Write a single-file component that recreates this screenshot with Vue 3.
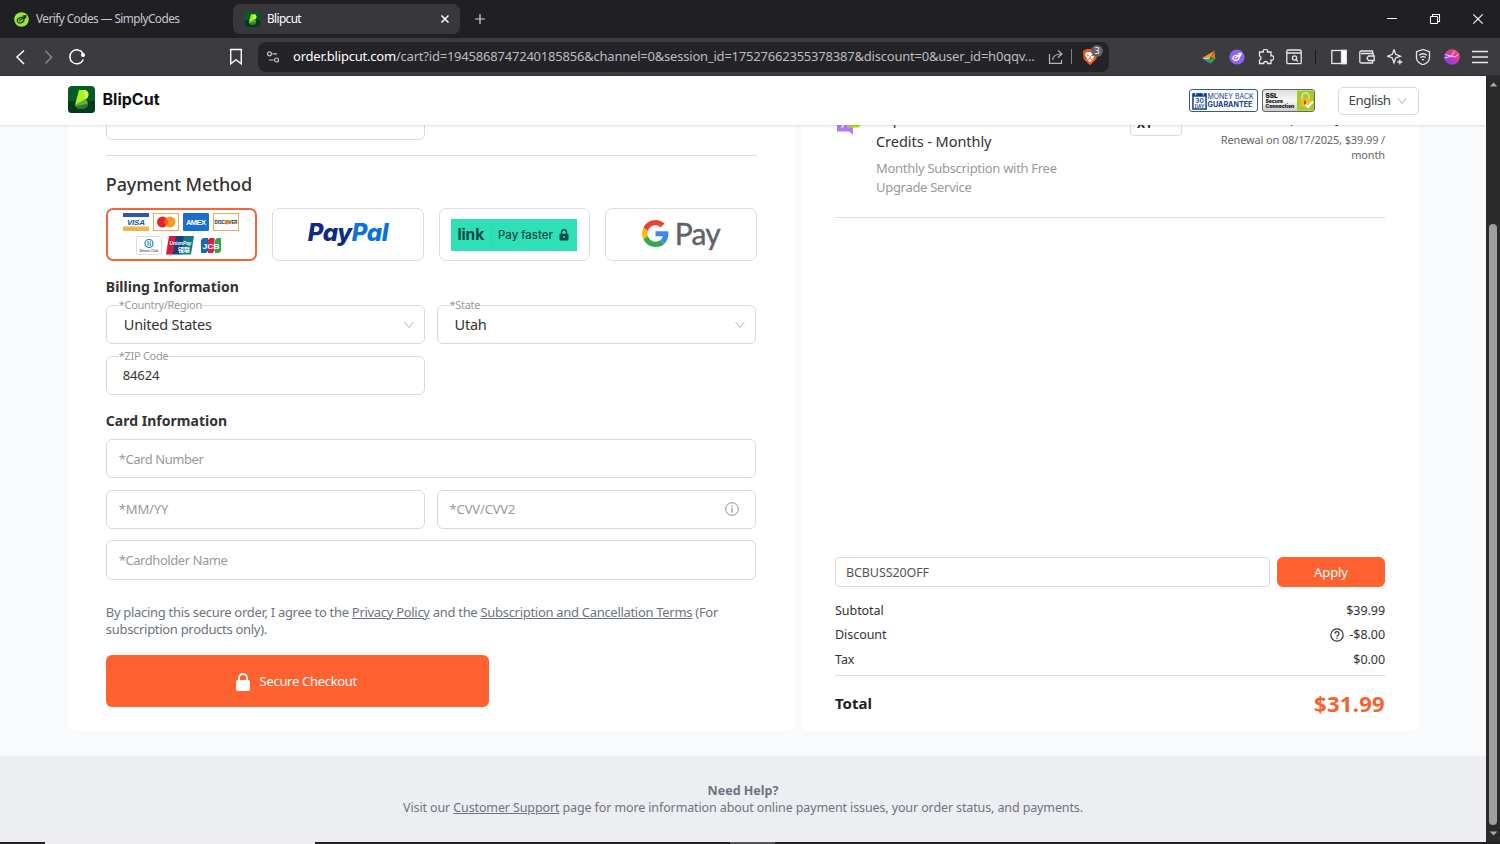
<template>
  <div class="browser">
    <!-- Tab strip -->
    <div class="tabs">
      <div class="tab tab-idle">
        <svg class="fav" viewBox="0 0 16 16">
          <circle cx="8" cy="8" r="7.8" fill="#9be63c" />
          <g fill="none" stroke="#1c3a12" stroke-width="1.3" stroke-linecap="round">
            <ellipse cx="7" cy="8.8" rx="3.6" ry="2.7" transform="rotate(-20 7 8.8)" />
            <path d="M5.8 9.3 12.8 4.2M9.5 4.5l3.3-.6M10.8 7.2l1.8-1.6" />
          </g>
        </svg>
        <span class="t-idle">Verify Codes — SimplyCodes</span>
      </div>
      <div class="tab tab-active">
        <BlipLogo class="fav" />
        <span class="t-active">Blipcut</span>
        <svg class="tab-close" viewBox="0 0 10 10"><path d="M1.5 1.5l7 7M8.5 1.5l-7 7" stroke="#fff" stroke-width="1.5" /></svg>
      </div>
      <svg class="tab-new" viewBox="0 0 12 12"><path d="M6 1v10M1 6h10" stroke="#d6d6da" stroke-width="1.2" /></svg>
      <div class="win">
        <svg viewBox="0 0 12 12"><path d="M1 5.5h10" stroke="#fff" /></svg>
        <svg viewBox="0 0 12 12" fill="none" stroke="#fff" stroke-width="1.1"><rect x="1.5" y="3.5" width="7" height="7" rx=".6" /><path d="M3.5 3.5v-2h7v7h-2" /></svg>
        <svg viewBox="0 0 12 12"><path d="M1.3 1.3l9.4 9.4M10.7 1.3l-9.4 9.4" stroke="#fff" stroke-width="1.1" /></svg>
      </div>
    </div>

    <!-- Address bar row -->
    <div class="toolbar">
      <svg class="nav back" viewBox="0 0 18 18"><path d="M12 2.500 5 9l7 7" /></svg>
      <svg class="nav fwd" viewBox="0 0 18 18"><path d="M6.500 3l6 6.300-6 6.300" /></svg>
      <svg class="nav reload" viewBox="0 0 18 18"><path d="M15.300 11.500A7 7 0 1 1 15 5.500" /><circle cx="15" cy="7" r="2.100" fill="#fff" stroke="none" /></svg>
      <svg class="nav mark" viewBox="0 0 14 18"><path d="M1.700 1.500h10.600v14.300L7 11.800l-5.300 4z" /></svg>
      <div class="omni">
        <svg class="tune" viewBox="0 0 14 14"><circle cx="3.500" cy="3.800" r="2" /><path d="M6.500 3.800H11M3 10h4.500" /><circle cx="10.500" cy="10" r="2" /></svg>
        <span class="url"><b>order.blipcut.com</b>/cart?id=1945868747240185856&amp;channel=0&amp;session_id=17527662355378387&amp;discount=0&amp;user_id=h0qqv...</span>
        <svg class="share" viewBox="0 0 16 16"><path d="M1.500 5v9.300h12V11M4.500 11c.5-4 3-6 9-6M10 1.500 14 5l-4 3.500" /></svg>
        <i class="bar"></i>
        <div class="shield">
          <svg viewBox="0 0 16 18">
            <path d="M4 1h8l1.500 1.500 1.500.3-.5 8.200L8 17.300 1.500 11 1 2.800l1.500-.3z" fill="#f4511e" />
            <path d="M4 4.500 8 4l4 .5 1 2-2 4.500L8 14.500 5 11 3 6.500z" fill="#fff" />
            <path d="M4.800 7l2 .6M11.200 7l-2 .6M8 8v2.500M6 11.500 8 10.500l2 1" stroke="#f4511e" fill="none" />
          </svg>
          <em>3</em>
        </div>
      </div>
      <div class="exts">
        <svg viewBox="0 0 16 16"><path d="M1 9 14 1.500 9.500 8z" fill="#f59a23" /><path d="M9.500 8 14 3v7z" fill="#ef6c2f" /><path d="M1 9l8.500-1-2.500 4z" fill="#eedb34" /><path d="M4 10.500l11-1.500-5 5.500z" fill="#29a74a" /><path d="M2 10l5 .5 1.500 4z" fill="#3d7de0" /></svg>
        <svg viewBox="0 0 16 16"><circle cx="8" cy="8" r="7.600" fill="#9063f5" /><g fill="none" stroke="#fff" stroke-width="1.200" stroke-linecap="round"><ellipse cx="7" cy="8.800" rx="3.200" ry="2.500" transform="rotate(-20 7 8.800)" /><path d="M6 9.200 12.300 4.500M9.500 4.500l2.800-.2M10.500 7.500l1.500-1.500" /></g></svg>
        <svg class="ln" viewBox="0 0 16 16"><path d="M1.500 3h3.800a2.200 2.200 0 1 1 4.200 0h3.500v3.800a2.200 2.200 0 1 1 0 4.200v3.500H9.700a2 2 0 0 0-4 0H1.500V11a2.200 2.200 0 0 0 0-4.200z" /></svg>
        <svg class="ln" viewBox="0 0 16 16"><rect x=".8" y="1" width="14.400" height="13.700" rx="1.200" /><path d="M.8 4h14.400M10 10.500l2 2" /><circle cx="8.500" cy="9" r="2.100" /></svg>
        <i class="sep"></i>
        <svg class="ln" viewBox="0 0 16 16"><rect x=".8" y="1.500" width="14.400" height="13" /><path d="M10.500 1.500h4.700v13h-4.700z" fill="#fff" /></svg>
        <svg class="ln" viewBox="0 0 16 16"><path d="M13.500 4.500V2H2.200A1.500 1.500 0 0 0 .8 3.500v9a1.500 1.500 0 0 0 1.400 1.500h11.300v-2.500M2 4.500h12.200V7M9.500 7h5.700v4.500H9.500L8 9.200z" /></svg>
        <svg class="ln" viewBox="0 0 16 16"><path d="M7 .8l1.700 4.500 4.800 1.900-4.800 1.800L7 13.800 5.300 9 .6 7.200l4.700-1.900zM12.800 10.500v5M10.300 13h5" /></svg>
        <svg class="ln" viewBox="0 0 16 16"><path d="M8 .5l6.500 2.200v5.800c0 3.500-3 6-6.500 7.300-3.500-1.300-6.500-3.800-6.500-7.300V2.700zM4 6.200c2.500-1.800 5.500-1.800 8 0M5.300 8.500c1.800-1.200 3.600-1.200 5.400 0M7 10.600h2" /></svg>
        <svg viewBox="0 0 16 16">
          <defs><linearGradient id="leo" x1="1" y1="0" x2="0" y2="1"><stop offset="0" stop-color="#fa5b3d" /><stop offset=".5" stop-color="#cf35b4" /><stop offset="1" stop-color="#4f50f0" /></linearGradient></defs>
          <circle cx="8" cy="8" r="7.800" fill="url(#leo)" /><path d="M1 5.500 11 8l4-3M.5 9l7-1.800 3-5" fill="none" stroke="#e8c9f5" stroke-width="1" />
        </svg>
        <svg class="ln menu" viewBox="0 0 16 16"><path d="M0 2.500h16M0 8h16M0 13.500h16" /></svg>
      </div>
    </div>

    <div class="viewport">
      <div class="page">
        <header class="site-head">
          <BlipLogo class="logo" />
          <span class="brand">BlipCut</span>
          <div class="badge money">
            <svg viewBox="0 0 16 20"><path d="M1 3h14v16H1z" fill="#fff" stroke="#123f91" stroke-width="1.600" /><path d="M1 2.500h14V6H1z" fill="#123f91" /><path d="M4 .5v4M12 .5v4" stroke="#fff" /><text x="8" y="12.500">30</text><text x="8" y="18" class="day">DAY</text></svg>
            <div><span>MONEY BACK</span><b>GUARANTEE</b></div>
          </div>
          <div class="badge ssl">
            <div><b class="big">SSL</b><b>Secure</b><b>Connection</b></div>
            <svg viewBox="0 0 17 20"><path d="M0 0h17v20H0z" fill="#a5cb27" /><path d="M5 9V6a3.500 3.500 0 0 1 7 0v3" fill="none" stroke="#d9dfc0" stroke-width="1.600" /><rect x="3.500" y="8" width="10" height="8" fill="#f4bd21" /><path d="M7 10h2v4H7z" fill="#a35a10" /><path d="M8.500 14l2.500 2.500 5-5.500" fill="none" stroke="#fff" stroke-width="2" /></svg>
          </div>
          <div class="lang"><span>English</span><Chevron /></div>
        </header>

        <main class="content">
          <section class="panel left">
            <div class="field cut"></div>
            <hr />
            <h2>Payment Method</h2>
            <div class="methods">
              <div class="method selected">
                <svg viewBox="0 0 120 44">
                  <g class="mk">
                    <rect x="2" y="0" width="26" height="4" fill="#2b5aa8" /><rect x="2" y="13.500" width="26" height="4.500" fill="#ebb650" />
                    <text x="15" y="12" font-size="8" font-style="italic" fill="#24529b" textLength="18">VISA</text>
                    <rect x="32.500" y=".5" width="25" height="17" fill="#fff" stroke="#e6ac58" /><circle cx="41.500" cy="9" r="5.500" fill="#e8232d" /><circle cx="49" cy="9" r="5.500" fill="#f59b24" /><path d="M45.250 5a5.500 5.500 0 0 1 0 8 5.500 5.500 0 0 1 0-8" fill="#f05a22" />
                    <rect x="62" y="0" width="26" height="18" rx="1" fill="#1970cd" /><text x="75" y="11.800" font-size="7.500" fill="#fff" textLength="20">AMEX</text>
                    <rect x="92.500" y=".5" width="25" height="17" fill="#fff" stroke="#e6ac58" /><text x="105" y="11.200" font-size="5.500" fill="#222" textLength="23" lengthAdjust="spacingAndGlyphs">DISCOVER</text><circle cx="106" cy="9.200" r="2.200" fill="#f08020" />
                    <rect x="15.500" y="23.500" width="25" height="18" rx="1" fill="#fff" stroke="#d8dce4" /><circle cx="28" cy="30.500" r="4" fill="#fff" stroke="#1b7fb5" stroke-width="1.200" /><path d="M27 28v5M29.200 28v5" stroke="#1b7fb5" /><text x="28" y="38.800" font-size="4" fill="#777" textLength="19">Diners Club</text>
                    <path d="M48 23h8l-3.500 18.500H45z" fill="#d8193f" /><path d="M55 23h9l-3.500 18.500h-9z" fill="#14427e" /><path d="M63 23h10l-3 18.500H59.500z" fill="#0d7d83" /><text x="59.500" y="31.500" font-size="6" font-style="italic" fill="#fff" textLength="22" lengthAdjust="spacingAndGlyphs">UnionPay</text><text x="63" y="38.500" font-size="6" fill="#fff" textLength="12">银联</text>
                    <path d="M82 25h5v13l-2 2h-5V27z" fill="#1767b3" /><path d="M89 25h4.500v13l-2 2H87V27z" fill="#d8203f" /><path d="M96 25h4v13l-2 2h-4V27z" fill="#2ea64a" /><text x="90" y="35.500" font-size="8" fill="#fff" textLength="17" lengthAdjust="spacingAndGlyphs">JCB</text>
                  </g>
                </svg>
              </div>
              <div class="method"><span class="paypal"><b>Pay</b><b class="pal">Pal</b></span></div>
              <div class="method">
                <div class="link">
                  <b>link</b><i></i><span>Pay faster</span>
                  <svg viewBox="0 0 10 12"><rect x=".5" y="4.800" width="9" height="6.700" rx="1" fill="#0b4a43" /><path d="M2.500 5V3.300a2.500 2.500 0 0 1 5 0V5" fill="none" stroke="#0b4a43" stroke-width="1.400" /><circle cx="5" cy="8" r="1" fill="#2fe0b6" /></svg>
                </div>
              </div>
              <div class="method gpay">
                <svg viewBox="0 0 48 48">
                  <path fill="#EA4335" d="M24 9.500c3.540 0 6.710 1.220 9.210 3.600l6.850-6.850C35.900 2.380 30.470 0 24 0 14.620 0 6.510 5.380 2.560 13.220l7.980 6.190C12.430 13.720 17.740 9.500 24 9.500z" />
                  <path fill="#4285F4" d="M46.980 24.550c0-1.570-.15-3.090-.38-4.550H24v9.020h12.940c-.58 2.960-2.260 5.480-4.780 7.180l7.730 6c4.510-4.180 7.090-10.360 7.090-17.650z" />
                  <path fill="#FBBC05" d="M10.530 28.590c-.48-1.450-.76-2.990-.76-4.590s.27-3.140.76-4.590l-7.980-6.190C.92 16.460 0 20.120 0 24c0 3.880.92 7.540 2.560 10.780l7.970-6.190z" />
                  <path fill="#34A853" d="M24 48c6.480 0 11.930-2.130 15.890-5.810l-7.730-6c-2.150 1.450-4.920 2.300-8.160 2.300-6.260 0-11.570-4.220-13.470-9.910l-7.980 6.190C6.510 42.620 14.620 48 24 48z" />
                </svg>
                <span>Pay</span>
              </div>
            </div>

            <h3>Billing Information</h3>
            <div class="grid">
              <div class="field sel"><label>*Country/Region</label><span>United States</span><Chevron /></div>
              <div class="field sel"><label>*State</label><span>Utah</span><Chevron /></div>
              <div class="field val"><label>*ZIP Code</label><span>84624</span></div>
            </div>

            <h3>Card Information</h3>
            <div class="grid">
              <div class="field wide">*Card Number</div>
              <div class="field">*MM/YY</div>
              <div class="field cvv">*CVV/CVV2
                <svg viewBox="0 0 14 14"><circle cx="7" cy="7" r="6.300" fill="none" stroke="#8d8d8d" /><path d="M7 6v4.500M7 3.500v1.300" stroke="#8d8d8d" stroke-width="1.200" /></svg>
              </div>
              <div class="field wide">*Cardholder Name</div>
            </div>

            <p class="terms">By placing this secure order, I agree to the <u>Privacy Policy</u> and the <u>Subscription and Cancellation Terms</u> (For<br />subscription products only).</p>
            <div class="checkout">
              <svg viewBox="0 0 14 18"><rect y="7" width="14" height="11" rx="2" fill="#fff" /><path d="M3 8V5a4 4 0 0 1 8 0v3" fill="none" stroke="#fff" stroke-width="1.800" /></svg>
              <span>Secure Checkout</span>
            </div>
          </section>

          <section class="panel right">
            <div class="item">
              <svg class="thumb" viewBox="0 0 26 26"><path d="M2 4h16v15.500l-4-3H2z" fill="#b07cf5" /><path d="M12 2h14v7.500l-2 3h-9z" fill="#9bea18" /><path d="M12 9h5l-2 3.500h-3z" fill="#f3a95c" /><path d="M6 9.500l3 1.500-3 1.500" fill="none" stroke="#fff" /></svg>
              <div class="desc">
                <div class="name">BlipCut 300<br />Credits - Monthly</div>
                <div class="sub">Monthly Subscription with Free<br />Upgrade Service</div>
              </div>
              <div class="qty">X1</div>
              <div class="price"><div class="now">Up to only $39.99</div>Renewal on 08/17/2025, $39.99 /<br />month</div>
            </div>
            <div class="coupon">
              <div class="code">BCBUSS20OFF</div>
              <div class="apply">Apply</div>
            </div>
            <div class="rows">
              <div v-for="r in rows" :key="r.label" class="row">
                <span>{{ r.label }}</span>
                <span class="amt">
                  <svg v-if="r.help" viewBox="0 0 14 14"><circle cx="7" cy="7" r="6.200" fill="none" stroke="#333" stroke-width="1.200" /><path d="M5 5.700a2 2 0 1 1 3 1.700c-.7.400-1 .6-1 1.300M7 9.700v1.200" fill="none" stroke="#333" stroke-width="1.200" /></svg>
                  {{ r.amount }}
                </span>
              </div>
            </div>
            <div class="total"><b>Total</b><b class="sum">$31.99</b></div>
          </section>
        </main>

        <footer class="help">
          <b>Need Help?</b>
          <p>Visit our <u>Customer Support</u> page for more information about online payment issues, your order status, and payments.</p>
        </footer>
      </div>

      <div class="scroll">
        <svg viewBox="0 0 10 6"><path d="M5 .5 9.500 5.500H.5z" fill="#a9a9a9" /></svg>
        <div class="thumb-bar"></div>
        <svg viewBox="0 0 10 6"><path d="M5 5.500 9.500.5H.5z" fill="#a9a9a9" /></svg>
      </div>
    </div>
    <div class="taskbar"><i></i><i class="dim"></i></div>
  </div>
</template>

<script setup>
import { h } from 'vue'

const rows = [
  { label: 'Subtotal', amount: '$39.99' },
  { label: 'Discount', amount: '-$8.00', help: true },
  { label: 'Tax', amount: '$0.00' }
]

// Logo shared by the tab and the site header
const BlipLogo = () => h('svg', { viewBox: '0 0 27 27' }, [
  h('rect', { width: 27, height: 27, rx: 4, fill: '#075b27' }),
  h('path', { d: 'M0 15h27v8a4 4 0 0 1-4 4H4a4 4 0 0 1-4-4z', fill: '#043b1c' }),
  h('path', { d: 'M7 19l10-5.500c4.500 1.500 4 9-2 9h-4c-2 0-3.500-1.200-4-3.500z', fill: '#6aa84a' }),
  h('path', { d: 'M7.500 20l9.500-1.500c2-.5 3-1.500 3-1.500 0 3.500-2 5.500-5 5.500h-4c-2 0-3-1-3.500-2.500z', fill: '#2b7a35' }),
  h('path', { d: 'M11 4h5c5.500 0 6 7.500 1 9.500L7 19z', fill: '#a4f41d' }),
  h('path', { d: 'M15.500 4H16c5.500 0 6 7.500 1 9.500z', fill: '#d3f65b' })
])

const Chevron = () => h('svg', { class: 'chev', viewBox: '0 0 10 8' }, [
  h('path', { d: 'M.7 1l4.300 5.500L9.300 1', fill: 'none', stroke: '#b5b5b5' })
])
</script>

<style scoped>
.browser {
  display: flex;
  flex-direction: column;
  width: 1500px;
  height: 844px;
  overflow: hidden;
  font-family: "Noto Sans", "Open Sans", sans-serif;
  color: #333;
  background: #201f24;
}

.browser :deep(svg) { display: block; flex: none; }
span, b { white-space: nowrap; }

/* Tabs */
.tabs { display: flex; align-items: center; height: 38px; flex: none; background: #201f24; font-size: 11.8px; }
.tab { display: flex; align-items: center; }
.tab-idle { width: 219px; padding-left: 14px; color: #c8c8cc; }
.fav { width: 15px; height: 15px; margin-right: 7px; }
.t-idle { margin-top: -2px; letter-spacing: -0.55px; }
.tab-active { width: 227px; height: 30px; box-sizing: border-box; padding: 0 10px 0 12px; border-radius: 7px; background: #38373c; color: #fff; }
.t-active { flex: 1; margin-top: -2px; letter-spacing: -0.6px; }
.tab-close { width: 10px; height: 10px; }
.tab-new { width: 12px; height: 12px; margin-left: 14px; }
.win { display: flex; gap: 31px; margin: 0 16px 0 auto; }
.win svg { width: 12px; height: 12px; }

/* Toolbar */
.toolbar { display: flex; align-items: center; height: 38px; flex: none; background: #3c3b40; border-bottom: 1px solid #302f34; box-sizing: border-box; }
.nav { fill: none; stroke: #fff; stroke-width: 1.5; width: 18px; height: 18px; }
.back { margin-left: 12px; }
.fwd { stroke: #88878c; margin-left: 9px; }
.reload { margin-left: 11px; }
.mark { width: 14px; height: 18px; margin-left: 143px; stroke-width: 1.4; }
.omni { display: flex; align-items: center; width: 851px; height: 30px; margin-left: 15px; border-radius: 8px; background: #242328; }
.tune { width: 14px; height: 14px; margin-left: 8px; fill: none; stroke: #c6c6ca; stroke-width: 1.2; }
.url { width: 745px; margin: -1px 0 0 13px; font-size: 13px; letter-spacing: -0.21px; color: #bdbdc1; }
.url b { font-weight: 400; color: #fff; }
.share { width: 16px; height: 16px; margin-left: 10px; fill: none; stroke: #b5b5ba; stroke-width: 1.2; }
.bar { width: 1px; height: 15px; margin-left: 7px; background: #808085; }
.shield { position: relative; margin-left: 10px; }
.shield svg { width: 16px; height: 18px; }
.shield em { position: absolute; left: 9px; top: -3px; width: 12px; height: 12px; border-radius: 6px; background: #62616b; color: #fff; font: normal 9px/12px "Noto Sans", sans-serif; text-align: center; }
.exts { display: flex; align-items: center; gap: 12.3px; margin: 0 12px 0 auto; }
.exts svg { width: 16px; height: 16px; }
.sep { width: 1px; height: 14px; margin: 0 2px 0 1px; background: #19191c; }
.ln { fill: none; stroke: #e8e8ea; stroke-width: 1.3; }

/* Viewport and scrollbar */
.viewport { display: flex; height: 766px; flex: none; }
.page { display: flex; flex-direction: column; width: 1486px; background: #f9fafc; }
.scroll { display: flex; flex-direction: column; align-items: center; width: 14px; box-sizing: border-box; padding: 6px 0 6px; background: #2b2b2b; }
.scroll svg { width: 9px; height: 5px; }
.thumb-bar { width: 8px; height: 601px; margin: 137px 0 auto; border-radius: 4px; background: #9f9f9f; }

/* Site header */
.site-head { position: relative; z-index: 2; display: flex; align-items: center; height: 49px; flex: none; box-sizing: border-box; padding: 0 67.5px 0 68px; background: #fff; box-shadow: 0 1px 2px rgba(0, 0, 0, 0.12); }
.logo { width: 27px; height: 27px; margin-top: -2px; }
.brand { margin: -3px auto 0 7.5px; font: 700 16px Inter, sans-serif; color: #111; }
.badge { display: flex; height: 23px; box-sizing: border-box; border-radius: 3px; }
.badge div { display: flex; flex-direction: column; }
.money { width: 69px; padding: 1px 3px 0 2px; border: 1px solid #31579d; color: #123f91; font: 6.9px/8px Inter, sans-serif; }
.money svg { width: 15px; height: 19px; }
.money text { font: 600 7px Inter, sans-serif; fill: #123f91; text-anchor: middle; }
.money .day { font-size: 5px; }
.money div { padding: 2px 0 0 1px; }
.money b { font-size: 7.2px; }
.ssl { width: 53px; margin: 0 23px 0 4px; border: 1px solid #666; background: linear-gradient(#ddd, #f8f8f8 50%, #ccc); overflow: hidden; font: 700 5px/5px Inter, sans-serif; color: #222; }
.ssl div { width: 34px; padding: 3px 0 0 3px; box-sizing: border-box; letter-spacing: -0.05px; }
.ssl .big { font-size: 6.5px; line-height: 6px; }
.ssl svg { width: 17px; height: 21px; }
.lang { display: flex; align-items: center; width: 81px; height: 28px; box-sizing: border-box; padding: 0 11px 0 10px; border: 1px solid #d9d9d9; border-radius: 5px; font-size: 13.3px; letter-spacing: -0.45px; color: #444; }
.lang span { margin-top: -1px; }
.lang .chev { margin-left: auto; }
.chev { width: 10px; height: 8px; }

/* Panels */
.content { display: flex; gap: 6.5px; height: 631px; flex: none; padding: 0 68px; overflow: hidden; }
.panel { box-sizing: border-box; height: 605.5px; flex: none; border-radius: 0 0 8px 8px; background: #fff; }
.left { width: 727px; padding: 0 38.4px 0 37.8px; }
.right { display: flex; flex-direction: column; width: 617px; padding: 0 33.5px; }
.field { position: relative; display: flex; align-items: center; height: 39.4px; box-sizing: border-box; padding: 0 12px; border: 1px solid #d9d9d9; border-radius: 6px; background: #fff; font-size: 13px; letter-spacing: -0.15px; color: #999; }
.cut { width: 319.6px; height: 40px; margin-top: -25px; }
hr { height: 1px; margin: 15px 0 0; border: 0; background: #dedede; }
h2 { margin: 15px 0 0; font-size: 18px; line-height: 26px; font-weight: 500; letter-spacing: -0.15px; color: #333; }
.methods { display: grid; grid-template-columns: repeat(4, 151.5px); justify-content: space-between; margin-top: 11px; }
.method { display: flex; align-items: center; justify-content: center; height: 53px; box-sizing: border-box; border: 1px solid #dedede; border-radius: 7px; }
.selected { border: 2px solid #f2653a; }
.selected svg { width: 120px; height: 44px; margin: 1px 2px 0 0; }
.mk text { font-family: "Liberation Sans", "Noto Sans CJK SC", sans-serif; font-weight: 700; text-anchor: middle; }
.paypal { margin-top: -3px; font: italic 24px/30px Inter, sans-serif; letter-spacing: -0.4px; color: #0b2c82; }
.paypal b { font-weight: 800; }
.paypal .pal { color: #0a72dc; }
.link { display: flex; align-items: center; width: 126px; height: 32px; box-sizing: border-box; padding: 0 8px 0 6px; background: #2fe0b6; color: #0b4a43; font: 500 11.4px Inter, sans-serif; }
.link b { font-size: 15.5px; letter-spacing: -0.1px; }
.link i { width: 1px; height: 20px; margin: 0 6px 0 7px; background: #2bd2ab; }
.link svg { width: 10px; height: 12px; margin-left: auto; }
.gpay { gap: 6px; }
.gpay svg { width: 27px; height: 27px; margin-top: -3px; }
.gpay span { margin-top: -4px; font: 30px/40px Lato, sans-serif; color: #5f6368; -webkit-text-stroke: 0.4px #5f6368; letter-spacing: -0.8px; }
h3 { margin: 16px 0 0; font-size: 14px; line-height: 20px; font-weight: 700; color: #333; letter-spacing: 0.02px; }
.grid { display: grid; grid-template-columns: 319.6px 319.6px; gap: 11.2px; margin-top: 8px; }
.wide { grid-column: span 2; letter-spacing: -0.45px; }
.field label { position: absolute; left: 12px; top: -8px; height: 14px; background: #fff; font-size: 11px; line-height: 14px; letter-spacing: -0.3px; color: #999; }
.sel, .val { color: #333; }
.sel { font-size: 14.5px; padding-left: 17px; letter-spacing: -0.25px; }
.sel span { margin-top: -1px; }
.val { font-size: 13px; padding-left: 16px; }
.sel .chev { margin: 0 -2px 0 auto; }
.cvv svg { width: 14px; height: 14px; margin: 0 4px 0 auto; }
.terms { margin: 24px 0 0; font-size: 13px; line-height: 17px; letter-spacing: -0.3px; color: #6d7380; white-space: nowrap; }
.checkout { display: flex; align-items: center; justify-content: center; gap: 10px; width: 383px; height: 52px; box-sizing: border-box; margin-top: 17px; padding-right: 2px; border-radius: 6px; background: #ff6230; color: #fff; font-size: 13px; letter-spacing: -0.3px; }
.checkout svg { width: 14px; height: 18px; margin-top: 2px; }

/* Order summary */
.item { display: flex; height: 114px; flex: none; box-sizing: border-box; margin-top: -21px; border-bottom: 1px solid #dedede; }
.thumb { width: 26px; height: 26px; margin-top: 11px; }
.desc { width: 254px; margin-left: 15px; }
.name { margin-top: 3px; font-size: 14.5px; line-height: 23px; letter-spacing: -0.05px; color: #333; }
.sub { margin-top: 6px; font-size: 13px; line-height: 19px; letter-spacing: -0.3px; color: #999; }
.qty { width: 52px; height: 32px; box-sizing: border-box; padding: 10px 6px 0; border: 1px solid #d9d9d9; border-radius: 4px; font-size: 12px; line-height: 17px; font-weight: 700; color: #222; }
.price { margin-left: auto; text-align: right; font-size: 11px; line-height: 15px; letter-spacing: -0.13px; color: #666; white-space: nowrap; }
.now { padding-top: 5px; margin-bottom: 4px; font-size: 13px; line-height: 19px; color: #333; }
.coupon { display: flex; justify-content: space-between; height: 30px; flex: none; margin-top: 339px; }
.code { width: 435px; height: 30px; box-sizing: border-box; padding: 0 10px; border: 1px solid #d9d9d9; border-radius: 4px; font-size: 12.5px; line-height: 29px; letter-spacing: -0.1px; color: #555; }
.apply { width: 108px; border-radius: 6px; background: #ff6230; color: #fff; font-size: 13px; line-height: 30px; letter-spacing: -0.1px; text-align: center; }
.rows { padding: 11px 0 3px; border-bottom: 1px solid #dedede; font-size: 12.5px; color: #333; }
.row { display: flex; justify-content: space-between; align-items: center; height: 24.6px; letter-spacing: -0.05px; }
.amt { display: flex; align-items: center; gap: 5px; }
.amt svg { width: 14px; height: 14px; }
.total { display: flex; justify-content: space-between; align-items: center; height: 54px; font-size: 15px; color: #222; }
.sum { font-size: 22px; letter-spacing: 0.3px; color: #f9602f; }

/* Footer */
.help { flex: 1; padding-top: 26px; background: #edeef2; text-align: center; font-size: 12.5px; line-height: 17px; color: #6d7380; }
.help b { display: block; }
.help p { margin: 0; letter-spacing: -0.12px; white-space: nowrap; }
.taskbar { display: flex; height: 2px; flex: none; background: #222; }
.taskbar i { width: 270px; height: 2px; margin-left: 45px; background: #eee; }
.taskbar .dim { width: 45px; margin-left: 415px; background: #555; }
</style>

<style>
body { background: #201f24; }
</style>
